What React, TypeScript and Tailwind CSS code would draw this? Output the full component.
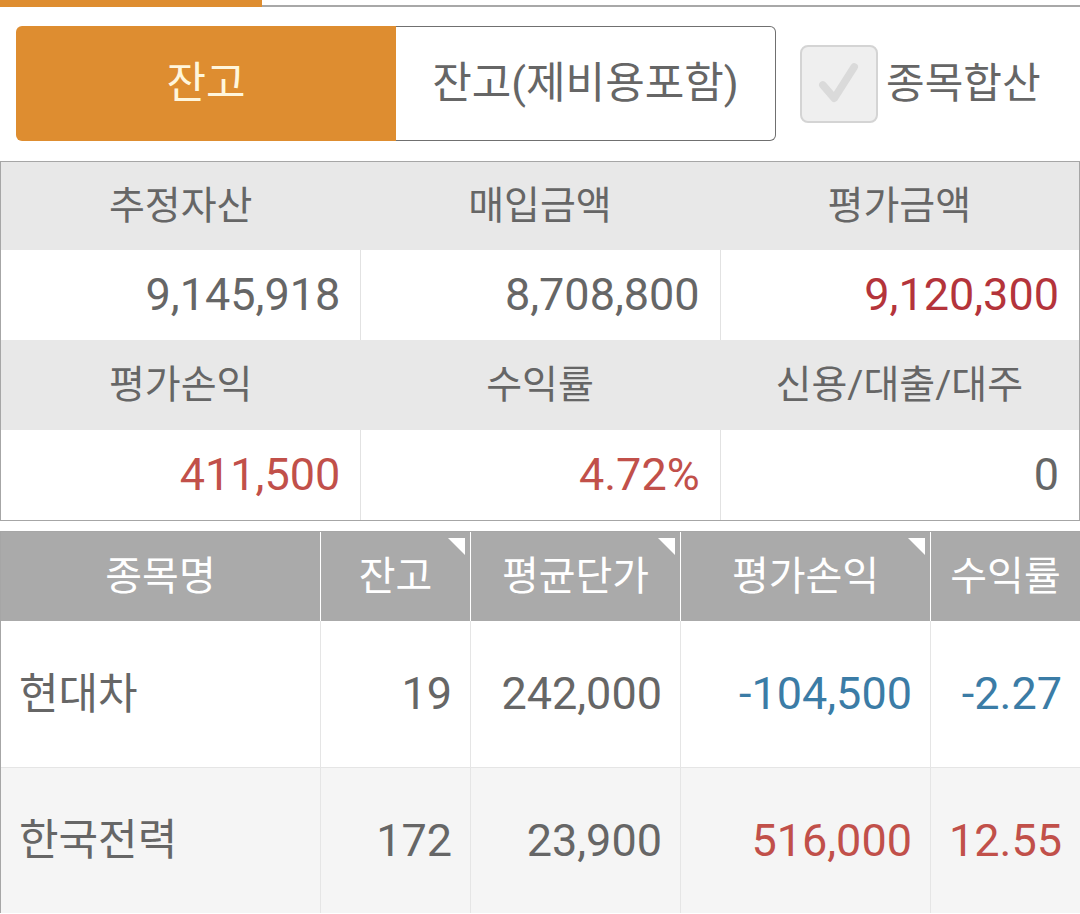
const summary = [
  [
    { label: "추정자산", value: "9,145,918", color: "text-[#666666]" },
    { label: "매입금액", value: "8,708,800", color: "text-[#666666]" },
    { label: "평가금액", value: "9,120,300", color: "text-[#b4343b]" },
  ],
  [
    { label: "평가손익", value: "411,500", color: "text-[#c1504a]" },
    { label: "수익률", value: "4.72%", color: "text-[#c1504a]" },
    { label: "신용/대출/대주", value: "0", color: "text-[#666666]" },
  ],
]

const columns = [
  { title: "종목명", marker: false },
  { title: "잔고", marker: true },
  { title: "평균단가", marker: true },
  { title: "평가손익", marker: true },
  { title: "수익률", marker: false },
]

const holdings = [
  { name: "현대차", qty: "19", avg: "242,000", pl: "-104,500", rate: "-2.27", tone: "text-[#3b7ca6]", bg: "bg-white" },
  { name: "한국전력", qty: "172", avg: "23,900", pl: "516,000", rate: "12.55", tone: "text-[#c1504a]", bg: "bg-[#f5f5f5]" },
]

function Marker() {
  return (
    <svg className="absolute right-[5px] top-[6px] h-[17px] w-[17px]" viewBox="0 0 17 17">
      <polygon points="0,0 17,0 17,17" fill="#ffffff" />
    </svg>
  )
}

export default function App() {
  return (
    <div
      className="h-[914px] w-[1080px] overflow-hidden bg-white"
      style={{ fontFamily: "Roboto, 'Noto Sans CJK KR', sans-serif" }}
    >
      {/* tab indicator */}
      <div className="flex h-[7px] items-end">
        <div className="h-[7px] w-[262px] bg-[#de8d30]" />
        <div className="h-[2px] flex-1 bg-[#a8a8a8]" />
      </div>

      {/* segment + checkbox */}
      <div className="mt-[19px] flex items-center pl-4">
        <div className="flex h-[115px] w-[760px]">
          <div className="flex w-[380px] items-center justify-center rounded-l-[6px] bg-[#de8d30] text-[43px] text-[#fff6dc]">
            잔고
          </div>
          <div className="flex w-[380px] items-center justify-center rounded-r-[6px] border border-l-0 border-[#707070] text-[43px] text-[#666666]">
            잔고(제비용포함)
          </div>
        </div>
        <div className="ml-6 flex h-[78px] w-[78px] items-center justify-center rounded-[8px] border-2 border-[#d4d4d4] bg-[#efefef]">
          <svg viewBox="0 0 78 78" className="h-[78px] w-[78px]">
            <polyline
              points="22,40 34,54 55,21"
              fill="none"
              stroke="#dadada"
              strokeWidth="8"
              strokeLinecap="round"
              strokeLinejoin="round"
            />
          </svg>
        </div>
        <span className="ml-[8px] text-[42px] text-[#666666]">종목합산</span>
      </div>

      {/* summary */}
      <div className="mt-5 border border-[#a6a6a6]">
        {summary.map((row, i) => (
          <div key={i}>
            <div className={`grid grid-cols-3 bg-[#e8e8e8] ${i === 0 ? "h-[88px]" : "h-[90px]"}`}>
              {row.map((c) => (
                <div key={c.label} className="flex items-center justify-center text-[39px] text-[#666666]">
                  {c.label}
                </div>
              ))}
            </div>
            <div className="grid h-[90px] grid-cols-3 bg-white">
              {row.map((c, j) => (
                <div
                  key={c.label}
                  className={`flex items-center justify-end pr-5 text-[45px] ${c.color} ${j > 0 ? "border-l border-[#e2e2e2]" : ""}`}
                >
                  {c.value}
                </div>
              ))}
            </div>
          </div>
        ))}
      </div>

      {/* holdings */}
      <div className="mt-[10px] border-t border-l border-[#a6a6a6]">
        <div className="grid h-[89px] grid-cols-[319px_150px_210px_250px_150px] bg-[#aaaaaa]">
          {columns.map((c, j) => (
            <div
              key={c.title}
              className={`relative flex items-center justify-center text-[40px] text-white ${j > 0 ? "border-l border-white" : ""}`}
            >
              {c.title}
              {c.marker && <Marker />}
            </div>
          ))}
        </div>
        {holdings.map((h, i) => (
          <div
            key={h.name}
            className={`grid h-[146px] grid-cols-[319px_150px_210px_250px_150px] ${h.bg} ${i > 0 ? "border-t border-[#e5e5e5]" : ""}`}
          >
            <div className="flex items-center pl-[18px] text-[43px] text-[#666666]">{h.name}</div>
            <div className="flex items-center justify-end border-l border-[#e5e5e5] pr-[18px] text-[45px] text-[#666666]">{h.qty}</div>
            <div className="flex items-center justify-end border-l border-[#e5e5e5] pr-[18px] text-[45px] text-[#666666]">{h.avg}</div>
            <div className={`flex items-center justify-end border-l border-[#e5e5e5] pr-[18px] text-[45px] ${h.tone}`}>{h.pl}</div>
            <div className={`flex items-center justify-end border-l border-[#e5e5e5] pr-[18px] text-[45px] ${h.tone}`}>{h.rate}</div>
          </div>
        ))}
      </div>
    </div>
  )
}
